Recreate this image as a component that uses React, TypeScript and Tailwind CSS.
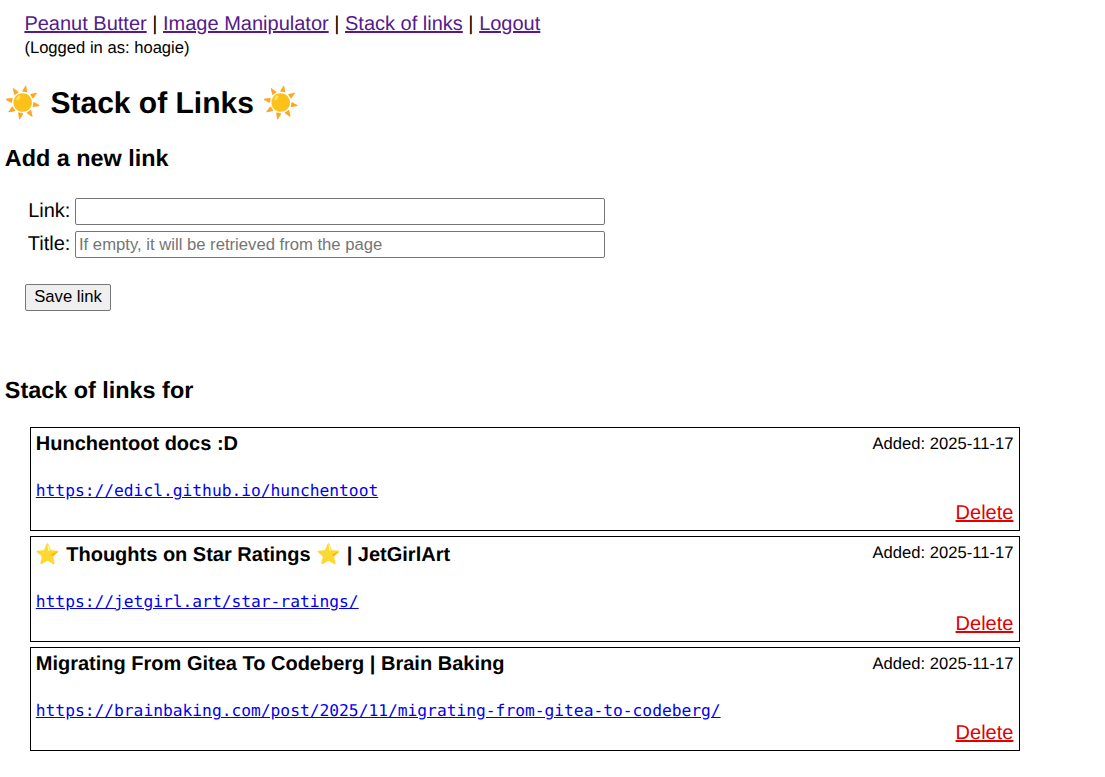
import React from "react";

interface LinkItem {
    title: string;
    url: string;
    added: string;
}

const links: LinkItem[] = [
    {
        title: "Hunchentoot docs :D",
        url: "https://edicl.github.io/hunchentoot",
        added: "2025-11-17",
    },
    {
        title: "⭐ Thoughts on Star Ratings ⭐ | JetGirlArt",
        url: "https://jetgirl.art/star-ratings/",
        added: "2025-11-17",
    },
    {
        title: "Migrating From Gitea To Codeberg | Brain Baking",
        url: "https://brainbaking.com/post/2025/11/migrating-from-gitea-to-codeberg/",
        added: "2025-11-17",
    },
];

const navLinks = ["Peanut Butter", "Image Manipulator", "Stack of links", "Logout"];

const App: React.FC = () => {
    return (
        <div className="bg-white text-black font-['Liberation_Sans',Arial,sans-serif] [text-rendering:geometricPrecision] pl-[4.8px] pb-[26px] min-h-[777px]">
            <div className="pl-[19.6px] pt-[13px]">
                <div className="text-[20px] leading-[23px]">
                    {navLinks.map((name, i) => (
                        <span key={name}>
                            {i > 0 && " | "}
                            <a href="#" className="text-[#551a8b] underline">
                                {name}
                            </a>
                        </span>
                    ))}
                </div>
                <div className="text-[16.6px] leading-[20px] mt-[2px]">(Logged in as: hoagie)</div>
            </div>

            <h1 className="text-[30px] leading-[37px] font-bold mt-[27px]">☀️ Stack of Links ☀️</h1>
            <h2 className="text-[23.4px] leading-[28px] font-bold mt-[22px]">Add a new link</h2>

            <form className="mt-[26px] pl-[20.2px]">
                <div className="flex flex-col gap-[6px]">
                    <div className="flex items-center">
                        <label className="w-[50px] pr-[4.6px] text-right text-[20px] leading-[23px]">Link:</label>
                        <input
                            type="text"
                            className="w-[530px] h-[27px] border border-[#767676] rounded-[2px] px-[3px] text-[16.67px] bg-white"
                        />
                    </div>
                    <div className="flex items-center">
                        <label className="w-[50px] pr-[4.6px] text-right text-[20px] leading-[23px]">Title:</label>
                        <input
                            type="text"
                            placeholder="If empty, it will be retrieved from the page"
                            className="w-[530px] h-[27px] border border-[#767676] rounded-[2px] px-[3px] text-[16.67px] bg-white placeholder:text-[#757575]"
                        />
                    </div>
                </div>
                <button
                    type="button"
                    className="mt-[26px] block h-[27px] w-[86px] pb-px border border-[#767676] rounded-[2px] bg-[#efefef] text-[16.67px] leading-[20px]"
                >
                    Save link
                </button>
            </form>

            <h2 className="text-[23.4px] leading-[28px] font-bold mt-[65px]">Stack of links for</h2>

            <div className="mt-[23px] ml-[25.2px] w-[990px] flex flex-col gap-[5px]">
                {links.map((link) => (
                    <div key={link.url} className="border border-black pt-[5px] pb-[5px] pl-[4.8px] pr-[5.6px]">
                        <div className="flex justify-between items-start">
                            <div className="text-[20px] leading-[normal] font-bold">{link.title}</div>
                            <div className="text-[16.6px] leading-[20px] mt-[1px]">Added: {link.added}</div>
                        </div>
                        <div className="mt-[25px] text-[16.25px] leading-[19px]">
                            <a href="#" className="text-[#0000ee] underline font-['DejaVu_Sans_Mono',monospace]">
                                {link.url}
                            </a>
                        </div>
                        <div className="text-right text-[20px] leading-[23px] mt-[1px]">
                            <a href="#" className="text-[#e00000] underline">
                                Delete
                            </a>
                        </div>
                    </div>
                ))}
            </div>
        </div>
    );
};

export default App;
